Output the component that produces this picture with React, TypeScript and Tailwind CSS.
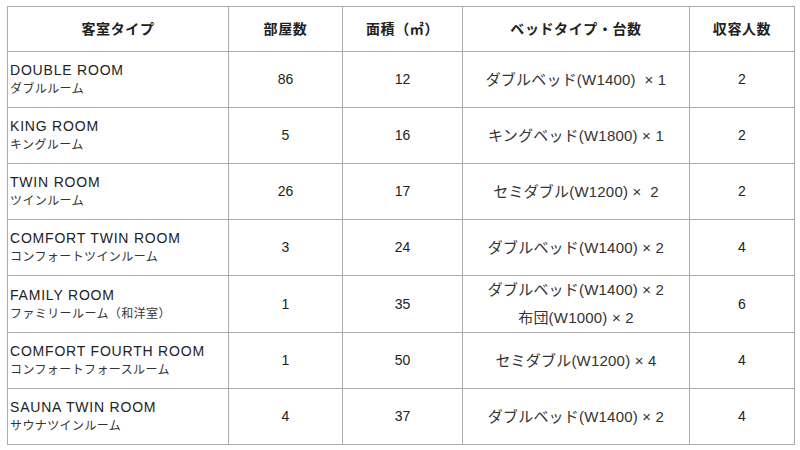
const rooms = [
  { en: 'DOUBLE ROOM', ja: 'ダブルルーム', count: '86', area: '12', beds: ['ダブルベッド(W1400)  × 1'], cap: '2' },
  { en: 'KING ROOM', ja: 'キングルーム', count: '5', area: '16', beds: ['キングベッド(W1800) × 1'], cap: '2' },
  { en: 'TWIN ROOM', ja: 'ツインルーム', count: '26', area: '17', beds: ['セミダブル(W1200) ×  2'], cap: '2' },
  { en: 'COMFORT TWIN ROOM', ja: 'コンフォートツインルーム', count: '3', area: '24', beds: ['ダブルベッド(W1400) × 2'], cap: '4' },
  { en: 'FAMILY ROOM', ja: 'ファミリールーム（和洋室）', count: '1', area: '35', beds: ['ダブルベッド(W1400) × 2', '布団(W1000) × 2'], cap: '6' },
  { en: 'COMFORT FOURTH ROOM', ja: 'コンフォートフォースルーム', count: '1', area: '50', beds: ['セミダブル(W1200) × 4'], cap: '4' },
  { en: 'SAUNA TWIN ROOM', ja: 'サウナツインルーム', count: '4', area: '37', beds: ['ダブルベッド(W1400) × 2'], cap: '4' },
]

const headers = ['客室タイプ', '部屋数', '面積（㎡）', 'ベッドタイプ・台数', '収容人数']

export default function App() {
  return (
    <div className="w-[800px] h-[450px] bg-white pl-[7px] pt-[6px] text-[#222] font-['Liberation_Sans','Noto_Sans_CJK_JP',sans-serif]">
      <table className="w-[787px] table-fixed border-collapse">
        <colgroup>
          <col className="w-[221px]" />
          <col className="w-[114px]" />
          <col className="w-[120px]" />
          <col className="w-[227px]" />
          <col className="w-[105px]" />
        </colgroup>
        <thead>
          <tr className="h-[45px]">
            {headers.map((h) => (
              <th key={h} className="border border-[#ababab] text-center text-[14px] font-bold tracking-[0.6px]">
                {h}
              </th>
            ))}
          </tr>
        </thead>
        <tbody>
          {rooms.map((r) => (
            <tr key={r.en} className="h-[56px]">
              <td className="border border-[#ababab] pl-[2px] align-middle">
                <div className="text-[14px] leading-[19px] tracking-[0.8px]">{r.en}</div>
                <div className="text-[12px] leading-[18px] tracking-[0.4px] text-[#333]">{r.ja}</div>
              </td>
              <td className="border border-[#ababab] text-center text-[14px]">{r.count}</td>
              <td className="border border-[#ababab] text-center text-[14px]">{r.area}</td>
              <td className="border border-[#ababab] text-center text-[15px] text-[#333]">
                {r.beds.map((b) => (
                  <div key={b} className="whitespace-pre leading-[28px] tracking-[0.2px]">
                    {b}
                  </div>
                ))}
              </td>
              <td className="border border-[#ababab] text-center text-[14px]">{r.cap}</td>
            </tr>
          ))}
        </tbody>
      </table>
    </div>
  )
}
